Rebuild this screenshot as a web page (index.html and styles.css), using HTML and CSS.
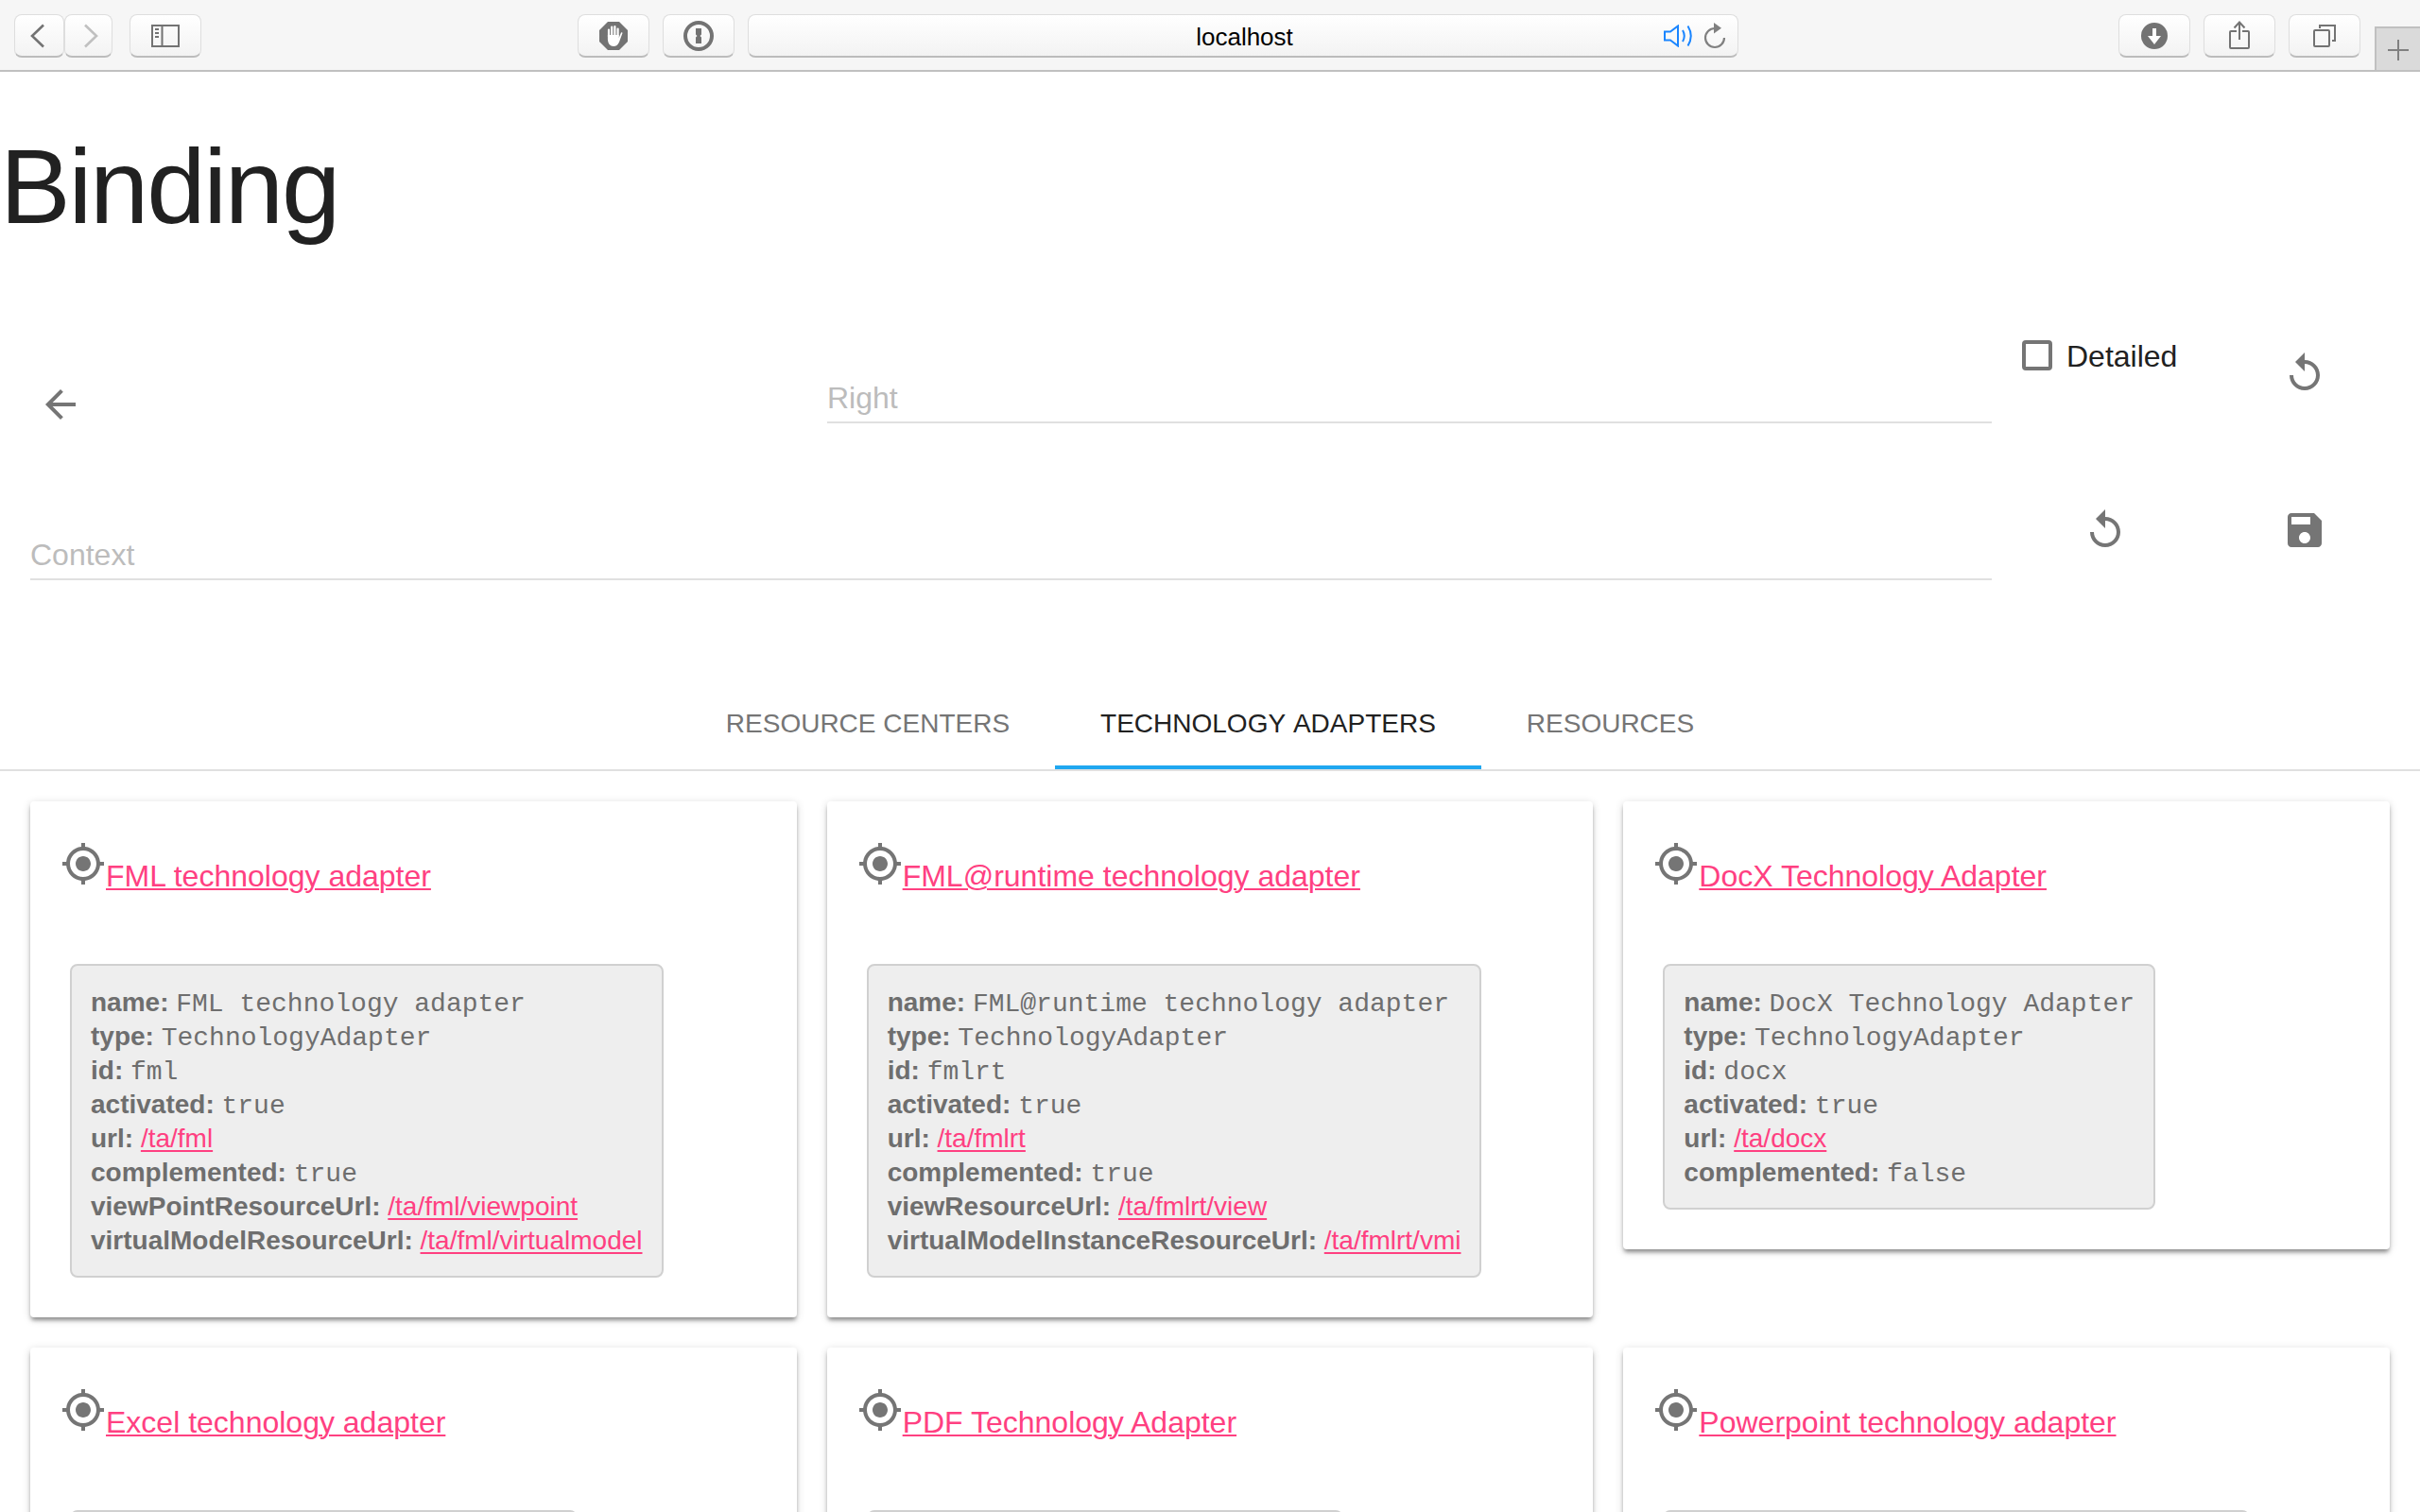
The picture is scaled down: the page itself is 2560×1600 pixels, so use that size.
FILE: index.html
```html
<!DOCTYPE html>
<html lang="en">
<head>
<meta charset="utf-8">
<title>Binding</title>
<link rel="stylesheet" href="styles.css">
</head>
<body>
<svg width="0" height="0" class="defs">
  <symbol id="gps" viewBox="0 0 24 24"><path d="M12 8c-2.21 0-4 1.79-4 4s1.79 4 4 4 4-1.79 4-4-1.79-4-4-4zm8.94 3c-.46-4.17-3.77-7.48-7.94-7.94V1h-2v2.06C6.83 3.52 3.52 6.83 3.06 11H1v2h2.06c.46 4.17 3.77 7.48 7.94 7.94V23h2v-2.06c4.17-.46 7.48-3.77 7.94-7.94H23v-2h-2.06zM12 19c-3.87 0-7-3.13-7-7s3.13-7 7-7 7 3.13 7 7-3.13 7-7 7z"/></symbol>
  <symbol id="replay" viewBox="0 0 24 24"><path d="M12 5V1L7 6l5 5V7c3.31 0 6 2.69 6 6s-2.69 6-6 6-6-2.69-6-6H4c0 4.42 3.58 8 8 8s8-3.58 8-8-3.58-8-8-8z"/></symbol>
</svg>
<header class="toolbar">
  <div class="btn back"><svg width="50" height="44" viewBox="0 0 50 44"><path d="M29 10.500 17 22l12 11.500" fill="none" stroke="#737373" stroke-width="2.600"/></svg></div>
  <div class="btn fwd"><svg width="48" height="44" viewBox="0 0 48 44"><path d="M20 10.500 32 22 20 33.500" fill="none" stroke="#c0c0c0" stroke-width="2.600"/></svg></div>
  <div class="btn side"><svg width="30" height="24" viewBox="0 0 30 24"><path d="M1 1h28v22H1zM11.500 1v22" fill="none" stroke="#737373" stroke-width="2"/><path d="M4 5h4M4 9h4M4 13h4" stroke="#737373" stroke-width="2"/></svg></div>
  <div class="btn hand"><svg width="30" height="30" viewBox="0 0 30 30"><path d="M9 0h12l9 9v12l-9 9H9l-9-9V9z" fill="#737373"/><path d="M10 16V8.500M13.200 14V5.500M16.400 14V5M19.600 15V7.500" stroke="#fff" stroke-width="2.200" stroke-linecap="round"/><path d="M8.900 14h11.800v3l2.300-5.500q1.500-.6 1.500.6L21 21.500Q19 26 15 26 9.500 26 8.900 19z" fill="#fff"/></svg></div>
  <div class="btn"><svg width="32" height="32" viewBox="0 0 32 32"><circle cx="16" cy="16" r="14" fill="none" stroke="#737373" stroke-width="4"/><path d="M13 8h6v6.500l-1.500 1.500 1.500 1.500V24h-6v-6.500l1.500-1.500-1.500-1.500z" fill="#737373"/></svg></div>
  <div class="btn url"><span class="host">localhost</span>
    <div class="url-icons">
      <svg width="32" height="24" viewBox="0 0 32 24" fill="none" stroke="#1a85ff" stroke-width="2"><path d="M1 7.500h6L15 1.500v21L7 16.500H1zM20 6q3.500 6 0 12M25.500 1.500q6.500 10.500 0 21"/></svg>
      <svg width="24" height="28" viewBox="0 0 24 28"><path d="M12 6a10 10 0 1 0 10 10" fill="none" stroke="#808080" stroke-width="2.200"/><path d="M11 0l8 5.800-8 5.700z" fill="#808080"/></svg>
    </div>
  </div>
  <div class="btn download"><svg width="28" height="28" viewBox="0 0 28 28"><circle cx="14" cy="14" r="14" fill="#737373"/><path d="M12 6h4v8h5l-7 9-7-9h5z" fill="#fff"/></svg></div>
  <div class="btn"><svg width="24" height="32" viewBox="0 0 24 32" fill="none" stroke="#737373" stroke-width="2"><path d="M9 11H3q-1 0-1 1v16q0 1 1 1h18q1 0 1-1V12q0-1-1-1h-6M12 20V2M6.500 7.500 12 1.500l5.500 6"/></svg></div>
  <div class="btn"><svg width="26" height="26" viewBox="0 0 26 26" fill="none" stroke="#737373" stroke-width="2"><rect x="2" y="7" width="16" height="17" rx="1"/><path d="M8 5V2h16v16h-3"/></svg></div>
  <div class="newtab"><svg width="24" height="24" viewBox="0 0 24 24"><path d="M12 1v22M1 12h22" stroke="#808080" stroke-width="2"/></svg></div>
</header>
<main>
  <h1>Binding</h1>
  <section class="row first">
    <svg class="icon arrow" viewBox="0 0 24 24"><path d="M20 11H7.830l5.590-5.590L12 4l-8 8 8 8 1.410-1.410L7.830 13H20v-2z"/></svg>
    <div class="field">Right</div>
    <div class="check"><span class="box"></span><span class="label">Detailed</span></div>
    <svg class="icon"><use href="#replay"/></svg>
  </section>
  <section class="row second">
    <div class="field">Context</div>
    <svg class="icon"><use href="#replay"/></svg>
    <svg class="icon" viewBox="0 0 24 24"><path d="M17 3H5c-1.110 0-2 .9-2 2v14c0 1.100.89 2 2 2h14c1.100 0 2-.9 2-2V7l-4-4zm-5 16c-1.660 0-3-1.340-3-3s1.340-3 3-3 3 1.340 3 3-1.340 3-3 3zm3-10H5V5h10v4z"/></svg>
  </section>
  <nav class="tabs"><span>RESOURCE CENTERS</span><span class="active">TECHNOLOGY ADAPTERS</span><span>RESOURCES</span></nav>
  <section class="cards">
    <article class="card">
      <div class="title"><svg class="icon"><use href="#gps"/></svg><a>FML technology adapter</a></div>
      <div class="props">
        <div><b>name:</b> <code>FML technology adapter</code></div>
        <div><b>type:</b> <code>TechnologyAdapter</code></div>
        <div><b>id:</b> <code>fml</code></div>
        <div><b>activated:</b> <code>true</code></div>
        <div><b>url:</b> <a>/ta/fml</a></div>
        <div><b>complemented:</b> <code>true</code></div>
        <div><b>viewPointResourceUrl:</b> <a>/ta/fml/viewpoint</a></div>
        <div><b>virtualModelResourceUrl:</b> <a>/ta/fml/virtualmodel</a></div>
      </div>
    </article>
    <article class="card">
      <div class="title"><svg class="icon"><use href="#gps"/></svg><a>FML@runtime technology adapter</a></div>
      <div class="props">
        <div><b>name:</b> <code>FML@runtime technology adapter</code></div>
        <div><b>type:</b> <code>TechnologyAdapter</code></div>
        <div><b>id:</b> <code>fmlrt</code></div>
        <div><b>activated:</b> <code>true</code></div>
        <div><b>url:</b> <a>/ta/fmlrt</a></div>
        <div><b>complemented:</b> <code>true</code></div>
        <div><b>viewResourceUrl:</b> <a>/ta/fmlrt/view</a></div>
        <div><b>virtualModelInstanceResourceUrl:</b> <a>/ta/fmlrt/vmi</a></div>
      </div>
    </article>
    <article class="card">
      <div class="title"><svg class="icon"><use href="#gps"/></svg><a>DocX Technology Adapter</a></div>
      <div class="props">
        <div><b>name:</b> <code>DocX Technology Adapter</code></div>
        <div><b>type:</b> <code>TechnologyAdapter</code></div>
        <div><b>id:</b> <code>docx</code></div>
        <div><b>activated:</b> <code>true</code></div>
        <div><b>url:</b> <a>/ta/docx</a></div>
        <div><b>complemented:</b> <code>false</code></div>
      </div>
    </article>
    <article class="card">
      <div class="title"><svg class="icon"><use href="#gps"/></svg><a>Excel technology adapter</a></div>
      <div class="props excel"></div>
    </article>
    <article class="card">
      <div class="title"><svg class="icon"><use href="#gps"/></svg><a>PDF Technology Adapter</a></div>
      <div class="props pdf"></div>
    </article>
    <article class="card">
      <div class="title"><svg class="icon"><use href="#gps"/></svg><a>Powerpoint technology adapter</a></div>
      <div class="props powerpoint"></div>
    </article>
  </section>
</main>
</body>
</html>
```
FILE: styles.css
```css
* { box-sizing: border-box; }
body { margin: 0; height: 1600px; overflow: hidden; background: #fff; color: #212121; font-family: "Liberation Sans", Arial, sans-serif; font-size: 32px; font-kerning: none; }
.defs { display: none; }
svg { display: block; flex: none; }

.toolbar { display: flex; align-items: flex-start; height: 76px; padding: 15px 0 0 15px; background: #f6f6f6; border-bottom: 2px solid #c0c0c0; }
.btn { display: flex; align-items: center; justify-content: center; flex: none; width: 76px; height: 46px; padding-top: 1px; margin-right: 14px; border: 1px solid #dedede; border-bottom: 2px solid #bcbcbc; border-radius: 8px; background: linear-gradient(#fff, #f3f3f3); }
.back { width: 53px; margin-right: 0; }
.fwd { width: 51px; margin-right: 18px; }
.side { margin-right: 398px; }
.url { display: grid; grid-template-columns: 1fr auto 1fr; width: 1048px; margin-right: 402px; color: #000; font-size: 26px; }
.host { grid-column: 2; padding: 2px 0 0 3px; }
.url-icons { display: flex; align-items: center; justify-content: flex-end; gap: 10px; padding-right: 12px; }
.newtab { display: flex; align-items: center; justify-content: center; width: 48px; height: 46px; padding-top: 2px; margin: 13px 0 0 auto; border: 2px solid #c0c0c0; border-width: 2px 0 0 2px; background: #dadada; }

h1 { margin: 0; padding: 58px 0 0 0; height: 280px; font-weight: 400; font-size: 112px; line-height: 128px; letter-spacing: -2.24px; }
.icon { width: 48px; height: 48px; fill: #757575; }
.row { display: flex; align-items: flex-start; padding: 0 32px; }
.first { height: 166px; }
.second { height: 214px; }
.arrow { margin: 48px 0 0 8px; }
.field { height: 54px; margin-top: 38px; border-bottom: 2px solid #e0e0e0; color: #bcbcbc; line-height: 54px; }
.first .field { width: 1232px; margin-left: 787px; }
.second .field { width: 2075px; }
.check { display: flex; align-items: center; gap: 15px; width: 275px; height: 40px; margin: 0 0 0 32px; color: #212121; }
.label { padding-top: 2px; }
.box { width: 32px; height: 32px; border: 4px solid #757575; border-radius: 4px; }
.first > .icon:last-child { margin-top: 15px; }
.second .icon { margin: 15px 0 0 96px; }
.second .icon:last-child { margin-left: 163px; }
.tabs { display: flex; justify-content: center; height: 80px; border-bottom: 2px solid #e0e0e0; font-size: 28px; color: #757575; line-height: 60px; }
.tabs span { padding: 0 48px; }
.tabs .active { color: #212121; border-bottom: 4px solid #20a7f0; }

.cards { display: grid; grid-template-columns: repeat(3, 1fr); gap: 32px; align-items: start; padding: 32px 32px 0; }
.card { padding: 42px 32px; border-radius: 4px; background: #fff; box-shadow: 0 2px 10px rgba(0,0,0,.16), 0 4px 4px -1px rgba(0,0,0,.38); }
.title { display: flex; height: 130px; font-kerning: normal; }
.title a { padding-top: 1px; line-height: 72px; text-underline-offset: 2px; }
a { color: #ff4081; text-decoration: underline; text-decoration-thickness: 2px; text-underline-offset: 3px; }
.props { width: fit-content; margin-left: 10px; padding: 21px 20px 19px; border: 2px solid #d0d0d0; border-radius: 8px; background: #eee; color: #6e6e6e; font-size: 28px; white-space: nowrap; }
.props div { height: 36px; line-height: 36px; }
.excel { width: 537px; }
.pdf { width: 504px; }
.powerpoint { width: 621px; }
code { font-family: "Liberation Mono", "Courier New", monospace; font-size: 28px; }
```
